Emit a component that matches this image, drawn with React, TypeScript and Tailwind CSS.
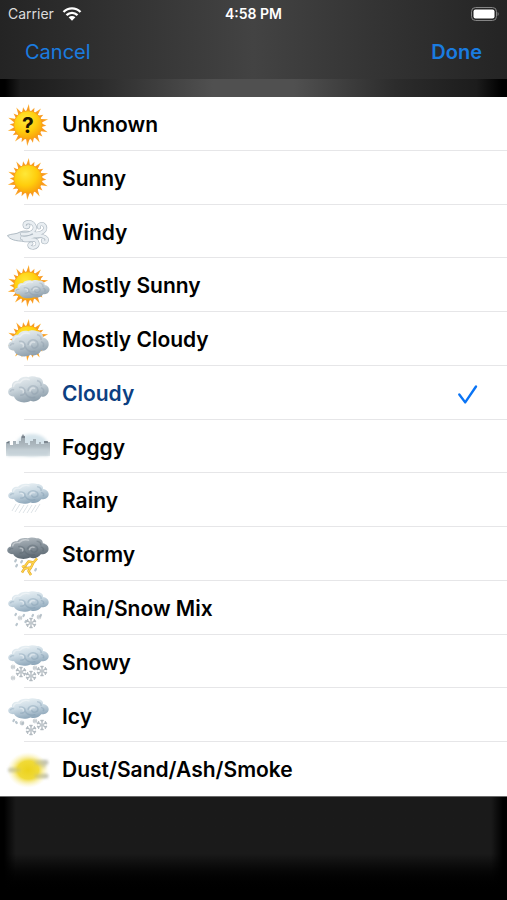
import { useState, type ReactNode } from 'react';

const RAYS = Array.from({ length: 20 }, (_, i) => i * 18);

// Gradients shared by all the weather icons
function IconDefs() {
  return (
    <svg className="absolute h-0 w-0" aria-hidden="true">
      <defs>
        <radialGradient id="sun" cx="0.4" cy="0.32" r="0.75">
          <stop offset="0" stopColor="#ffe838" />
          <stop offset="0.55" stopColor="#ffcd0c" />
          <stop offset="1" stopColor="#f99a0c" />
        </radialGradient>
        <radialGradient id="ray" cx="22" cy="22" r="21" gradientUnits="userSpaceOnUse">
          <stop offset="0.6" stopColor="#f58a1c" />
          <stop offset="1" stopColor="#ffb52e" />
        </radialGradient>
        <linearGradient id="cloud" x1="0.1" y1="0" x2="0.5" y2="1">
          <stop offset="0" stopColor="#eef3f5" />
          <stop offset="0.5" stopColor="#c8d3da" />
          <stop offset="1" stopColor="#8d9eab" />
        </linearGradient>
        <linearGradient id="rainCloud" x1="0.1" y1="0" x2="0.5" y2="1">
          <stop offset="0" stopColor="#f0f6f8" />
          <stop offset="0.5" stopColor="#cbdae4" />
          <stop offset="1" stopColor="#8da6b9" />
        </linearGradient>
        <linearGradient id="stormCloud" x1="0.1" y1="0" x2="0.3" y2="1">
          <stop offset="0" stopColor="#b4bcc2" />
          <stop offset="0.5" stopColor="#87929b" />
          <stop offset="1" stopColor="#5d6973" />
        </linearGradient>
        <linearGradient id="fog" x1="0" y1="0" x2="0" y2="1">
          <stop offset="0" stopColor="#929ca3" />
          <stop offset="0.6" stopColor="#b3bec5" />
          <stop offset="1" stopColor="#e2e9ec" />
        </linearGradient>
        <radialGradient id="dust">
          <stop offset="0" stopColor="#ecd21c" />
          <stop offset="0.5" stopColor="#f0da38" />
          <stop offset="1" stopColor="#fbf3bd" stopOpacity="0" />
        </radialGradient>
        <filter id="soft" x="-20%" y="-50%" width="140%" height="200%">
          <feGaussianBlur stdDeviation="1.4" />
        </filter>
        <filter id="haze" x="-10%" y="-10%" width="120%" height="120%">
          <feGaussianBlur stdDeviation="0.6" />
        </filter>
      </defs>
    </svg>
  );
}

function Sun() {
  return (
    <g>
      {RAYS.map((angle, i) => (
        <path
          key={angle}
          d={i % 2 ? 'M20 9 22.8 3.6 24 9Z' : 'M20 9 22.8 1 24 9Z'}
          fill="url(#ray)"
          transform={`rotate(${angle} 22 22)`}
        />
      ))}
      <circle cx="22" cy="22" r="14.2" fill="url(#sun)" stroke="#f7a11a" strokeWidth="0.8" />
    </g>
  );
}

type CloudProps = { fill?: string; line?: string; transform?: string };

function Cloud({ fill = 'url(#cloud)', line = '#7d909e', transform }: CloudProps) {
  return (
    <g transform={transform}>
      <path
        d="M8 24.5C4.6 25 2 22.6 2.2 19.6 2.4 17 4.2 15.6 6 15.3 5.2 11 8.4 8.2 12 8.8 14 5.2 18.2 4 22.4 5.2 24.4 4 28.4 3.6 31 5.2 34.4 4.8 37.6 8 37 11.4 41 12.2 43.4 15.8 42.6 19.4 42 22.8 38.6 25.2 35.2 24.6 33.4 28.4 28.6 30.6 24.6 28.8 19.6 31.6 10.4 31 8 24.5Z"
        fill={fill}
      />
      <path
        d="M13 15.5c3.4-1 6.4 1.2 6 4.4-.3 2.4-2.6 3.8-4.8 3M22 18.8c.4-4 4-6 7.2-4.6 3.4 1.5 3.8 6.2.4 7.6-2 .8-4-.4-3.8-2.4M31 8.6c3 .4 4.6 2.8 4 5.4M35 15.8c2.6.6 3.4 3 2 5M4.4 19.8c.2-1.8 2-2.8 3.6-1.8M19 20.4c2 4.6 5.8 6.2 10.4 4.8"
        fill="none"
        stroke={line}
        strokeOpacity="0.3"
        strokeWidth="1.6"
      />
      <path
        d="M7.5 14.5C8 10.8 11 10 14 10.6 16.5 7 20 6.4 23 7.6M15 17.2c2 0 3 1.6 2.2 3.4M24 19c.4-2.2 2.4-3.6 4.4-2.6"
        fill="none"
        stroke="#fff"
        strokeOpacity="0.4"
        strokeWidth="1.6"
        strokeLinecap="round"
      />
    </g>
  );
}

function RainCloud() {
  return <Cloud fill="url(#rainCloud)" line="#6d8ba2" transform="translate(0 1) scale(1 0.78)" />;
}

function Flake({ x, y, r = 5 }: { x: number; y: number; r?: number }) {
  return (
    <g transform={`translate(${x} ${y}) scale(${r / 5})`} stroke="#b3bbc1" strokeWidth="1.3" strokeLinecap="round">
      {[0, 60, 120, 180, 240, 300].map((angle) => (
        <path key={angle} d="M0-1V-4.8M-1.2-4.6 0-3.4 1.2-4.6" fill="none" transform={`rotate(${angle})`} />
      ))}
    </g>
  );
}

function Drops({ d }: { d: string }) {
  return <path d={d} fill="none" stroke="#b9c5cd" strokeWidth="2.2" strokeLinecap="round" />;
}

const windPath =
  'M16 24C25 25 31 20 28 15 25 10.5 18 11.5 18.6 15.4 19 17.6 22 17.8 22.4 15.6M16 28C22 29 26 25.5 32 25.5 38 25.5 42 28 40.6 31 39.6 33 36.6 32.4 37 30M28 23.5C36 24.5 41 20 38.5 15.6 36 12.6 32 14.4 33 17.4M18 30C23 31 28 28 30.6 31 33 34.6 30.6 38 26.4 37.6 22.8 37.2 22.4 33.8 25.4 33.6';

const boltPath = 'M31 25.5 27.5 29.5 22.5 28.5 19.5 32.5 16 34M27.5 29.5 25 34.5 18.5 35.5 16 39.5M25 34.5 22.5 38 25 42';

type Condition = { name: string; icon: ReactNode };

const conditions: Condition[] = [
  {
    name: 'Unknown',
    icon: (
      <>
        <Sun />
        <text x="22" y="29.5" textAnchor="middle" fontSize="21" fontWeight="700" fill="#1b1400">
          ?
        </text>
      </>
    ),
  },
  { name: 'Sunny', icon: <Sun /> },
  {
    name: 'Windy',
    icon: (
      <>
        <path
          d="M1.5 25.5C6 23.4 10 24.6 14 22 19 20 25 21.6 30 23 35 24 38 25.6 39 27.6 32 26.6 26 31.2 18 31.2 10 31.2 3.4 29.6 1.5 25.5Z"
          fill="#e6ebef"
          stroke="#a8b4bd"
          strokeWidth="0.9"
        />
        <path d={windPath} fill="none" stroke="#adb8c1" strokeWidth="4" strokeLinecap="round" />
        <path d={windPath} fill="none" stroke="#e9eef2" strokeWidth="2.8" strokeLinecap="round" />
      </>
    ),
  },
  {
    name: 'Mostly Sunny',
    icon: (
      <>
        <Sun />
        <Cloud transform="translate(6.4 13) scale(0.87 0.7)" />
      </>
    ),
  },
  {
    name: 'Mostly Cloudy',
    icon: (
      <>
        <Sun />
        <Cloud transform="translate(0 8)" />
      </>
    ),
  },
  { name: 'Cloudy', icon: <Cloud /> },
  {
    name: 'Foggy',
    icon: (
      <>
        <ellipse cx="26" cy="20" rx="16" ry="11" fill="#d6e4eb" filter="url(#soft)" />
        <path
          d="M0 31V17h2v-1h2v4h3v-4h3v3h3v-3h2v-4l2-3 2 3v6h3v2h2v-4h3v-2h3v5h3v-2h2v2h3v-3h3v1h3v14Z"
          fill="url(#fog)"
          filter="url(#haze)"
        />
        <path d="M16 12h3M38 17h4M1 17.5h2" stroke="#707a82" strokeWidth="1.6" filter="url(#haze)" />
        <rect x="1" y="24" width="42" height="7" fill="#c3cfd6" fillOpacity="0.8" filter="url(#soft)" />
      </>
    ),
  },
  {
    name: 'Rainy',
    icon: (
      <>
        <RainCloud />
        <path
          d="M10 25l-4 7M14 25l-5 8M18 26l-5 8M22 26l-5 8M26 26l-5 8M30 26l-5 8M34 25l-5 8"
          stroke="#dde3e7"
          strokeWidth="1"
        />
      </>
    ),
  },
  {
    name: 'Stormy',
    icon: (
      <>
        <Cloud fill="url(#stormCloud)" line="#4d5963" transform="translate(-1 1) scale(1.02 0.82)" />
        <Drops d="M10 27l-.8 1.4M16 28l-.8 1.4M11 32l-.8 1.4M20 34l-.8 1.4M30 36l-.8 1.4" />
        <path d={boltPath} fill="none" stroke="#e0a52c" strokeWidth="2.4" strokeLinejoin="round" />
        <path d={boltPath} fill="none" stroke="#ffd54a" strokeWidth="1.4" />
      </>
    ),
  },
  {
    name: 'Rain/Snow Mix',
    icon: (
      <>
        <RainCloud />
        <Drops d="M10 27l-.6 1M18 28l-.6 1M27 28l-.6 1M35 28l-.6 1M11 37l-.6 1M20 34l-.6 1" />
        <Flake x={14} y={31} r={2} />
        <Flake x={33} y={30} r={2} />
        <Flake x={25} y={36} />
      </>
    ),
  },
  {
    name: 'Snowy',
    icon: (
      <>
        <RainCloud />
        <Flake x={7} y={26} r={2} />
        <Flake x={7} y={37} r={2} />
        <Flake x={29} y={27} r={2} />
        <Flake x={15} y={31} />
        <Flake x={25} y={35} />
        <Flake x={36} y={30} />
      </>
    ),
  },
  {
    name: 'Icy',
    icon: (
      <>
        <RainCloud />
        <Drops d="M8 26l-.6 1M17 29l-.6 1M10 28l.8 1" />
        <Flake x={16} y={29} r={2} />
        <Flake x={29} y={27} r={2} />
        <Flake x={25} y={36} />
        <Flake x={36} y={31} />
      </>
    ),
  },
  {
    name: 'Dust/Sand/Ash/Smoke',
    icon: (
      <>
        <path d="M24 14h16M24 28h16M4 22h12M28 18h10" stroke="#c0c2b8" strokeLinecap="round" strokeWidth="4" filter="url(#soft)" />
        <ellipse cx="22" cy="22" rx="21" ry="18" fill="url(#dust)" />
        <path
          d="M30 15h11M5 22h8M30 28h11"
          stroke="#b4b498"
          strokeOpacity="0.5"
          strokeLinecap="round"
          strokeWidth="3"
          filter="url(#soft)"
        />
      </>
    ),
  },
];

function StatusBar() {
  return (
    <div className="grid h-7 grid-cols-3 items-center px-2 text-sm text-white">
      <div className="flex items-center gap-2 text-[#dcdcdc]">
        <span>Carrier</span>
        <svg className="h-4 w-5" viewBox="0 0 20 16" aria-label="Wi-Fi">
          <path d="M1.5 6C6.4 1.2 13.6 1.2 18.5 6M4.5 9.2C7.8 6.1 12.2 6.1 15.5 9.2" fill="none" stroke="#fff" strokeWidth="2.4" />
          <path d="M6.6 11.3C8.6 9.5 11.4 9.5 13.4 11.3L10 14.8Z" fill="#fff" />
        </svg>
      </div>
      <span className="text-center font-semibold">4:58 PM</span>
      <svg className="h-4 w-7 justify-self-end" viewBox="0 0 28 16" aria-label="Battery">
        <rect x="0.5" y="1.5" width="25" height="13" rx="4" fill="none" stroke="#858585" />
        <rect x="2.5" y="3.5" width="21" height="9" rx="2" fill="#fff" />
        <path d="M26.6 6v4c1.4-.5 1.4-3.5 0-4Z" fill="#858585" />
      </svg>
    </div>
  );
}

export default function App() {
  const [selected, setSelected] = useState('Cloudy');

  return (
    <div className="flex min-h-screen flex-col bg-black font-['Inter','Liberation_Sans',sans-serif]">
      <IconDefs />

      {/* Navigation bar */}
      <header className="bg-linear-to-r from-[#242424] via-[#434343] to-[#242424]">
        <StatusBar />
        <div className="flex h-[51px] items-center justify-between px-[25px] pb-1 text-xl text-[#1a7ce0]">
          <button type="button">Cancel</button>
          <button type="button" className="font-semibold">
            Done
          </button>
        </div>
      </header>
      <div className="h-[18px] bg-[linear-gradient(to_right,#000_1%,#1c1c1c_4%,#2c2c2c_20%,#505050_42%,#505050_58%,#2c2c2c_78%,#1c1c1c_94%,#000_99%)]" />

      {/* Conditions */}
      <div role="radiogroup" aria-label="Weather condition" className="flex flex-1 flex-col bg-white">
        {conditions.map(({ name, icon }) => (
          <label key={name} className="group relative flex min-h-12 flex-1 cursor-pointer items-center pt-0.5 pl-6">
            <input
              type="radio"
              name="condition"
              value={name}
              checked={selected === name}
              onChange={() => setSelected(name)}
              className="peer sr-only"
            />
            <svg className="-ml-[18px] h-11 w-11 shrink-0" viewBox="0 0 44 44" aria-hidden="true">
              {icon}
            </svg>
            <span className="ml-3 flex-1 text-[21px] font-semibold text-black peer-checked:text-[#0c3f82]">{name}</span>
            {selected === name && (
              <svg className="mr-7 h-6 w-6" viewBox="0 0 24 24" fill="none" aria-hidden="true">
                <path d="M4.3 12.5 10.2 20.4 21 4.5" stroke="#0a74f5" strokeWidth="2.4" strokeLinecap="round" strokeLinejoin="round" />
              </svg>
            )}
            <span className="absolute right-0 bottom-0 left-6 h-px bg-[#e6e6e8] group-last:hidden" />
          </label>
        ))}
      </div>

      <footer className="flex h-[104px] justify-between border-t border-[#6b6b6b] bg-linear-to-b from-[#1a1a1a] from-55% to-black to-95%">
        <div className="w-4 bg-linear-to-r from-black from-25% to-transparent" />
        <div className="w-4 bg-linear-to-l from-black from-25% to-transparent" />
      </footer>
    </div>
  );
}
